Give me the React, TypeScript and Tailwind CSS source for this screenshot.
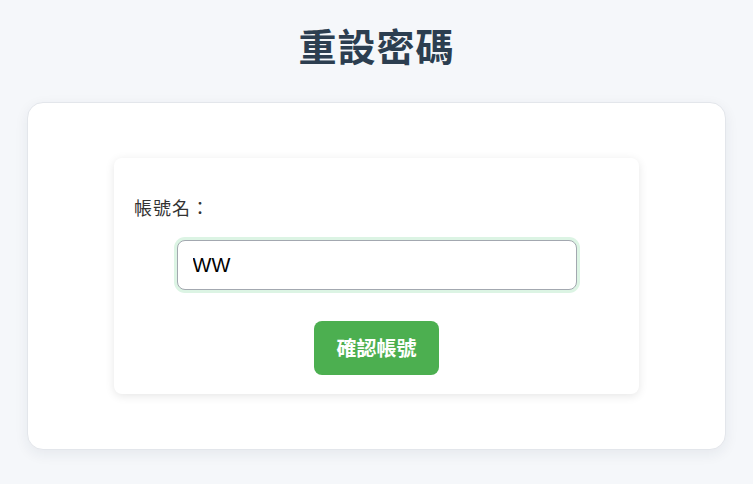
import { useState } from "react";

const App = () => {
  const [name, setName] = useState("WW");

  return (
    <div
      className="min-h-[484px] w-full bg-[#f5f7fa] px-[27px] pt-[22px] pb-[34px]"
      style={{ fontFamily: '"Noto Sans CJK TC", "Noto Sans", sans-serif' }}
    >
      {/* 標題 */}
      <h1 className="text-center text-[38px] leading-[46px] font-semibold tracking-[1px] text-[#2c3e50]">
        重設密碼
      </h1>

      {/* 外層卡片 */}
      <div className="mt-[34px] rounded-[16px] border border-[#e3e6eb] bg-white pt-[55px] pb-[55px] shadow-[0_4px_14px_rgba(30,40,70,0.07)]">
        {/* 內層表單 */}
        <div className="mx-auto w-[525px] rounded-[8px] bg-white px-5 pt-[36px] pb-[19px] shadow-[0_2px_10px_rgba(0,0,0,0.1)]">
          <label className="block text-[18px] leading-[27px] font-normal tracking-[1px] text-[#333]">
            帳號名：
          </label>

          <div className="mt-[19px] flex justify-center">
            <input
              value={name}
              onChange={(e) => setName(e.target.value)}
              className="h-[50px] w-[400px] rounded-[8px] border border-[#a3a8b0] bg-white px-[15px] text-[20px] text-black outline-none ring-[3px] ring-[#dcf4e4]"
              style={{ fontFamily: '"Liberation Sans", Arial, sans-serif' }}
            />
          </div>

          <div className="mt-[31px] flex justify-center">
            <button className="h-[54px] w-[125px] rounded-[8px] bg-[#4caf50] text-[20px] font-bold text-white">
              確認帳號
            </button>
          </div>
        </div>
      </div>
    </div>
  );
};

export default App;
